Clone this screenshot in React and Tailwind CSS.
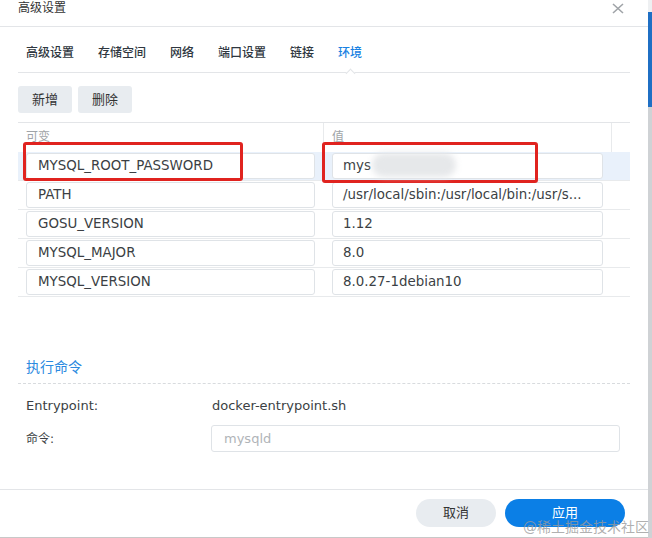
import React from "react";

const rows = [
  ["MYSQL_ROOT_PASSWORD", "mys"],
  ["PATH", "/usr/local/sbin:/usr/local/bin:/usr/s..."],
  ["GOSU_VERSION", "1.12"],
  ["MYSQL_MAJOR", "8.0"],
  ["MYSQL_VERSION", "8.0.27-1debian10"],
];

const tabs = ["高级设置", "存储空间", "网络", "端口设置", "链接", "环境"];

export default function App() {
  return (
    <div className="relative flex w-[652px] h-[538px] bg-white overflow-hidden font-['DejaVu_Sans','Noto_Sans_CJK_SC',sans-serif] text-[#3b3f44]">
      {/* dialog */}
      <div className="flex flex-col w-[648px] h-[538px] border-b border-[#c8c8c8]">
        {/* header */}
        <div className="flex justify-between h-[27px] border-b border-[#e3e5e8] pl-[18px] pr-[24px] shrink-0">
          <span className="text-[12px] leading-[17px] text-[#333]">高级设置</span>
          <svg width="12" height="11" viewBox="0 0 12 11" className="mt-[3px]">
            <path d="M1 1L11 10M11 1L1 10" stroke="#a0a4a8" strokeWidth="1.6" />
          </svg>
        </div>

        {/* tabs */}
        <div className="mx-[18px] h-[46px] border-b border-[#e3e5e8] flex gap-[24px] pl-[8px] pt-[18px] shrink-0">
          {tabs.map((t, i) => (
            <div
              key={t}
              className={
                "relative text-[12px] leading-[16px] font-medium " +
                (i === 5 ? "text-[#1a82e2]" : "text-[#2f3740]")
              }
            >
              {t}
              {i === 5 && (
                <span className="absolute left-[9px] top-[25px] w-[7px] h-[7px] rotate-45 bg-white border-l border-t border-[#e3e5e8]" />
              )}
            </div>
          ))}
        </div>

        {/* buttons */}
        <div className="flex gap-[6px] mx-[18px] mt-[13px] shrink-0">
          <button className="w-[54px] h-[27px] rounded-[3px] bg-[#e8ecf0] text-[13px] text-[#333]">新增</button>
          <button className="w-[54px] h-[27px] rounded-[3px] bg-[#e8ecf0] text-[13px] text-[#333]">删除</button>
        </div>

        {/* table */}
        <div className="mx-[18px] mt-[9px] border-t border-[#e3e5e8] shrink-0">
          <div className="flex h-[29px] text-[12px] text-[#a0a4a8]">
            <div className="w-[306px] border-r border-[#e8eaec] pl-[8px] pt-[5px]">可变</div>
            <div className="w-[288px] border-r border-[#e8eaec] pl-[8px] pt-[5px]">值</div>
          </div>
          {rows.map(([k, v], i) => (
            <div
              key={k}
              className={
                "flex items-center h-[29px] border-b border-[#e8eaec] " +
                (i === 0 ? "bg-[#e9f1fb]" : "")
              }
            >
              <div className="w-[306px] pl-[8px]">
                <div className="w-[289px] h-[26px] rounded-[3px] border border-[#dfe3e7] bg-white px-[11px] text-[13.4px] leading-[24px] truncate">
                  {k}
                </div>
              </div>
              <div className="w-[288px] pl-[8px]">
                <div className="w-[271px] h-[26px] rounded-[3px] border border-[#dfe3e7] bg-white px-[10px] text-[13.4px] leading-[24px] truncate">
                  {v}
                </div>
              </div>
            </div>
          ))}
        </div>

        {/* command section */}
        <div className="mx-[18px] mt-[58px] border-b border-dashed border-[#d8dbde] pl-[8px] pb-[4px] shrink-0">
          <span className="text-[14px] leading-[20px] text-[#2b8ae0]">执行命令</span>
        </div>
        <div className="flex items-center mx-[18px] pl-[8px] mt-[13px] h-[18px] text-[13px] shrink-0">
          <span className="w-[186px]">Entrypoint:</span>
          <span>docker-entrypoint.sh</span>
        </div>
        <div className="flex items-center mx-[18px] pl-[8px] mt-[10px] shrink-0">
          <span className="w-[185px] text-[12px]">命令:</span>
          <div className="w-[409px] h-[27px] rounded-[3px] border border-[#dfe3e7] px-[12px] text-[13px] leading-[25px] text-[#b0b4b8]">
            mysqld
          </div>
        </div>

        <div className="flex-1" />

        {/* footer */}
        <div className="h-[48px] border-t border-[#e3e5e8] flex justify-end gap-[9px] pr-[23px] pt-[9px] shrink-0">
          <button className="w-[80px] h-[28px] rounded-full bg-[#e8ecf0] text-[13px] text-[#333]">取消</button>
          <button className="w-[120px] h-[28px] rounded-full bg-[#0b7fe6] text-[13px] text-white">应用</button>
        </div>
      </div>

      {/* scrollbar edge */}
      <div className="flex flex-col w-[4px] h-[538px] bg-[#cfd2d5]">
        <div className="h-[12px] bg-[#eef0f2]" />
        <div className="h-[95px] bg-[#1f6fc4]" />
      </div>

      {/* annotations */}
      <div className="absolute left-[23px] top-[142px] w-[220px] h-[39px] border-[3px] border-[#e0231f] rounded-[3px]" />
      <div className="absolute left-[322px] top-[142px] w-[216px] h-[41px] border-[3px] border-[#e0231f] rounded-[3px]" />
      <div className="absolute left-[372px] top-[153px] w-[84px] h-[24px] rounded-full bg-[#e6e8ea] blur-[3px]" />

      {/* watermark */}
      <div className="absolute left-[523px] top-[519px] text-[14px] leading-[17px] text-[#9a9a9a]/80 whitespace-nowrap">
        @稀土掘金技术社区
      </div>
    </div>
  );
}
